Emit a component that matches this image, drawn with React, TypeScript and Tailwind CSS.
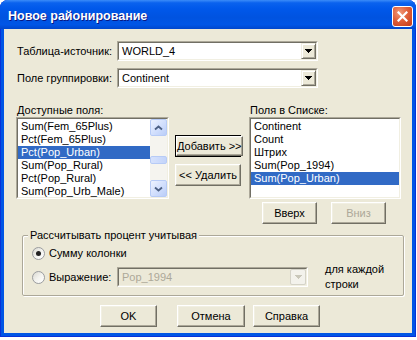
import React from "react";

function TriArrow({ disabled }: { disabled?: boolean }) {
  const c = disabled ? "#C9C7BA" : "#000";
  return (
    <svg width="7" height="4" viewBox="0 0 7 4" shapeRendering="crispEdges">
      <rect x="0" y="0" width="7" height="1" fill={c} />
      <rect x="1" y="1" width="5" height="1" fill={c} />
      <rect x="2" y="2" width="3" height="1" fill={c} />
      <rect x="3" y="3" width="1" height="1" fill={c} />
    </svg>
  );
}

function Combo({ value, className = "", disabled }: { value: string; className?: string; disabled?: boolean }) {
  return (
    <div
      className={`flex h-[20px] border border-t-[#ACA899] border-l-[#ACA899] border-r-white border-b-white ${
        disabled ? "bg-[#ECE9D8]" : "bg-white"
      } ${className}`}
    >
      <div className="flex flex-1 items-center border border-t-[#716F64] border-l-[#716F64] border-r-[#F1EFE2] border-b-[#F1EFE2]">
        <span className={`flex-1 pl-[3px] leading-[13px] whitespace-nowrap ${disabled ? "text-[#ACA899]" : "text-black"}`}>
          {value}
        </span>
        {disabled ? (
          <div className="flex h-[16px] w-[16px] items-center justify-center rounded-[2px] border border-[#D5D3C8] bg-[#F3F2EC]">
            <TriArrow disabled />
          </div>
        ) : (
          <div className="flex h-[16px] w-[15px] items-center justify-center border border-t-[#F1EFE2] border-l-[#F1EFE2] border-r-[#716F64] border-b-[#716F64] bg-[#ECE9D8] shadow-[inset_1px_1px_0_#fff,inset_-1px_-1px_0_#ACA899]">
            <TriArrow />
          </div>
        )}
      </div>
    </div>
  );
}

function ScrollBtn({ down }: { down?: boolean }) {
  return (
    <div className="flex h-[17px] w-[17px] items-center justify-center rounded-[2px] border border-[#B7CBF6] bg-[linear-gradient(135deg,#EEF3FF_0%,#D3E0FD_50%,#BACDF8_100%)]">
      <svg width="9" height="6" viewBox="0 0 9 6">
        {down ? (
          <path d="M1 1.5 L4.5 4.5 L8 1.5" stroke="#4D6185" strokeWidth="1.8" fill="none" />
        ) : (
          <path d="M1 4.5 L4.5 1.5 L8 4.5" stroke="#4D6185" strokeWidth="1.8" fill="none" />
        )}
      </svg>
    </div>
  );
}

function ScrollBar() {
  return (
    <div className="flex w-[17px] flex-col bg-[#F5F4EF]">
      <ScrollBtn />
      <div className="h-[20px]" />
      <div className="h-[8px] rounded-[2px] border border-[#B7CBF6] bg-[linear-gradient(90deg,#D6E2FD,#C3D4FA)]" />
      <div className="flex-1" />
      <ScrollBtn down />
    </div>
  );
}

function ListBox({
  items,
  selected,
  scroll,
  className = "",
}: {
  items: string[];
  selected: number;
  scroll?: boolean;
  className?: string;
}) {
  return (
    <div className={`flex border border-t-[#ACA899] border-l-[#ACA899] border-r-white border-b-white bg-white ${className}`}>
      <div className="flex min-w-0 flex-1 overflow-hidden border border-t-[#716F64] border-l-[#716F64] border-r-[#F1EFE2] border-b-[#F1EFE2]">
        <div className="flex min-w-0 flex-1 flex-col pt-[1px]">
          {items.map((t, i) => (
            <div
              key={t}
              className={`h-[13px] whitespace-nowrap pl-[3px] leading-[13px] ${
                i === selected ? "bg-[#316AC5] text-white" : "text-black"
              }`}
            >
              {t}
            </div>
          ))}
        </div>
        {scroll && <ScrollBar />}
      </div>
    </div>
  );
}

function Btn({
  children,
  className = "",
  def,
  disabled,
}: {
  children: React.ReactNode;
  className?: string;
  def?: boolean;
  disabled?: boolean;
}) {
  const face = `flex flex-1 items-center justify-center whitespace-nowrap border border-t-white border-l-white border-r-[#716F64] border-b-[#716F64] bg-[#ECE9D8] shadow-[inset_-1px_-1px_0_#ACA899,inset_1px_1px_0_#F1EFE2] ${
    disabled ? "text-[#ACA899]" : "text-black"
  }`;
  return (
    <div className={`flex h-[22px] ${def ? "border border-black" : ""} ${className}`}>
      <div className={face}>{children}</div>
    </div>
  );
}

function Radio({ checked }: { checked?: boolean }) {
  return (
    <div className="flex h-[13px] w-[13px] items-center justify-center rounded-full border border-[#9A9C9F] bg-[linear-gradient(135deg,#D9D8D0_0%,#F3F3EF_50%,#FFFFFF_100%)]">
      {checked && <div className="h-[5px] w-[5px] rounded-full bg-[#222]" />}
    </div>
  );
}

export default function App() {
  const left = [
    "Sum(Fem_65Plus)",
    "Pct(Fem_65Plus)",
    "Pct(Pop_Urban)",
    "Sum(Pop_Rural)",
    "Pct(Pop_Rural)",
    "Sum(Pop_Urb_Male)",
  ];
  const right = ["Continent", "Count", "Штрих", "Sum(Pop_1994)", "Sum(Pop_Urban)"];
  return (
    <div className="h-[340px] w-[417px] overflow-hidden bg-white font-['Liberation_Sans',Arial,sans-serif] text-[11px] text-black">
      <div className="flex h-[337px] w-[416px] flex-col overflow-hidden rounded-t-[8px] bg-[#0055E5] shadow-[inset_1px_0_0_#0831D9,inset_-1px_0_0_#0831D9,inset_0_-1px_0_#0831D9]">
        {/* Title bar */}
        <div className="flex h-[29px] items-start bg-[linear-gradient(180deg,#3B8CF8_0%,#0A62EE_10%,#0058EA_30%,#0053E0_60%,#0056E6_85%,#0047CC_100%)] pl-[8px] pr-[3px] pt-[6px]">
          <span className="h-[21px] text-[12.5px] font-bold leading-[21px] text-white [text-shadow:1px_1px_0_#0A1883]">
            Новое районирование
          </span>
          <div className="ml-auto flex h-[21px] w-[21px] items-center justify-center rounded-[3px] border border-white bg-[radial-gradient(circle_at_35%_30%,#F09A7A_0%,#E0603A_45%,#C23A18_100%)]">
            <svg width="11" height="11" viewBox="0 0 11 11">
              <path d="M1.5 1.5 L9.5 9.5 M9.5 1.5 L1.5 9.5" stroke="#fff" strokeWidth="2.2" strokeLinecap="square" />
            </svg>
          </div>
        </div>

        {/* Client area */}
        <div className="mx-[4px] mb-[4px] flex flex-1 flex-col bg-[#ECE9D8] pl-[12px] pt-[12px]">
          <div className="flex h-[20px] items-center">
            <span className="w-[101px] whitespace-nowrap pl-[1px]">Таблица-источник:</span>
            <Combo value="WORLD_4" className="w-[201px]" />
          </div>
          <div className="mt-[7px] flex h-[20px] items-center">
            <span className="w-[101px] whitespace-nowrap pl-[1px]">Поле группировки:</span>
            <Combo value="Continent" className="w-[201px]" />
          </div>

          <div className="mt-[15px] flex">
            <div className="flex w-[153px] flex-col">
              <span className="h-[14px] pl-[1px] leading-[14px]">Доступные поля:</span>
              <ListBox items={left} selected={2} scroll className="h-[82px]" />
            </div>
            <div className="ml-[6px] flex flex-col gap-[7px] pt-[32px]">
              <Btn def className="w-[66px]">
                Добавить &gt;&gt;
              </Btn>
              <Btn className="w-[66px]">&lt;&lt; Удалить</Btn>
            </div>
            <div className="ml-[8px] flex w-[152px] flex-col">
              <span className="h-[14px] pl-[1px] leading-[14px]">Поля в Списке:</span>
              <ListBox items={right} selected={4} className="h-[82px]" />
              <div className="mt-[3px] flex gap-[14px] pl-[13px]">
                <Btn className="w-[55px]">Вверх</Btn>
                <Btn disabled className="w-[55px]">
                  Вниз
                </Btn>
              </div>
            </div>
          </div>

          <fieldset className="ml-[6px] mt-[5px] h-[67px] w-[382px] rounded-[2px] border border-[#ACA899] shadow-[1px_1px_0_#fff,inset_1px_1px_0_#fff]">
            <legend className="ml-[5px] bg-[#ECE9D8] px-[2px] leading-[13px]">Рассчитывать процент учитывая</legend>
            <div className="flex flex-col pl-[9px] pt-[4px]">
              <div className="flex h-[14px] items-center">
                <Radio checked />
                <span className="ml-[4px]">Сумму колонки</span>
              </div>
              <div className="mt-[2px] flex items-center">
                <Radio />
                <span className="ml-[4px] w-[68px]">Выражение:</span>
                <Combo disabled value="Pop_1994" className="w-[191px]" />
                <div className="ml-[17px] leading-[15px]">
                  для каждой
                  <br />
                  строки
                </div>
              </div>
            </div>
          </fieldset>

          <div className="mt-[9px] flex pl-[84px]">
            <Btn className="w-[57px]">OK</Btn>
            <Btn className="ml-[20px] w-[68px]">Отмена</Btn>
            <Btn className="ml-[8px] w-[67px]">Справка</Btn>
          </div>
        </div>
      </div>
    </div>
  );
}
